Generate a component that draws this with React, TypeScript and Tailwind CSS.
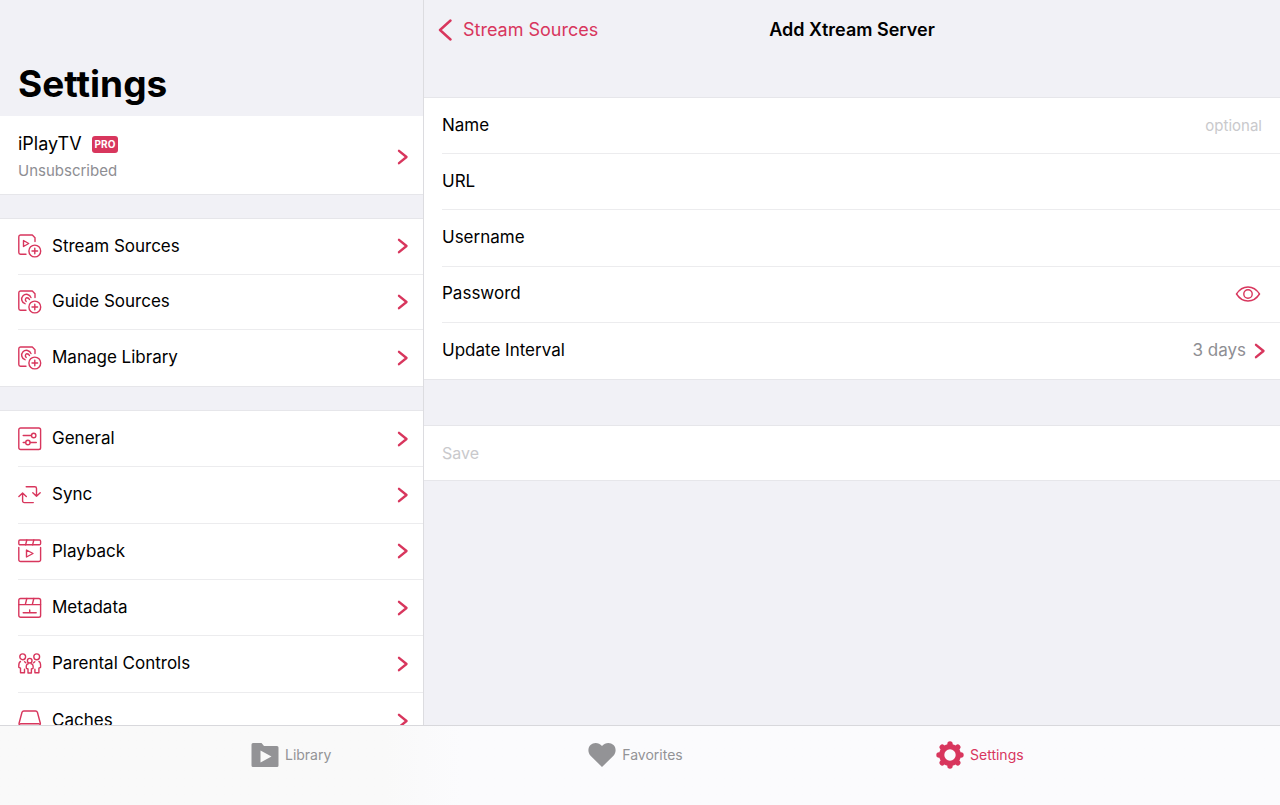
import type { ReactNode } from "react";

type IconProps = { children: ReactNode };

function LineIcon({ children }: IconProps) {
  return (
    <svg
      viewBox="0 0 24 24"
      className="size-6 shrink-0"
      fill="none"
      stroke="currentColor"
      strokeWidth="1.4"
      strokeLinecap="round"
      strokeLinejoin="round"
      aria-hidden="true"
    >
      {children}
    </svg>
  );
}

// Page outline with the round "plus" badge in its corner
function DocumentPlus({ children }: IconProps) {
  return (
    <LineIcon>
      <path d="M8 20.3H2.5A1.8 1.8 0 0 1 .8 18.5V2.8A1.8 1.8 0 0 1 2.5 1H14.3L17 3.7V7.5" />
      {children}
      <circle cx="16.8" cy="17" r="5.9" />
      <path d="M16.8 14.2v5.6M14 17h5.6" />
    </LineIcon>
  );
}

const guideIcon = (
  <DocumentPlus>
    <path d="M7 13.7A4.8 4.8 0 1 1 13 7.6" />
    <path d="M8.2 11.4A2.1 2.1 0 0 1 8.9 7.7q1.800.1 2.600 1.800" />
  </DocumentPlus>
);

const sources = [
  {
    label: "Stream Sources",
    icon: (
      <DocumentPlus>
        <path d="M5.5 6.5v6l5.200-3z" />
      </DocumentPlus>
    ),
  },
  { label: "Guide Sources", icon: guideIcon },
  { label: "Manage Library", icon: guideIcon },
];

const preferences = [
  {
    label: "General",
    icon: (
      <LineIcon>
        <rect x="0.8" y="1" width="21.8" height="21.5" rx="1.8" />
        <path d="M5.2 8.5h8M5.2 15.5h2.3M12.3 15.5h6" />
        <circle cx="15.7" cy="8.5" r="2.2" />
        <circle cx="9.9" cy="15.5" r="2.2" />
      </LineIcon>
    ),
  },
  {
    label: "Sync",
    icon: (
      <LineIcon>
        <path d="M8.2 3.8h8.6a1.7 1.7 0 0 1 1.7 1.7v7.8M14.8 9.800l3.700 3.500 3.700-3.500" />
        <path d="M15.3 19.6H6.3a1.7 1.7 0 0 1-1.7-1.7V10M.9 13.5 4.6 10l3.7 3.5" />
      </LineIcon>
    ),
  },
  {
    label: "Playback",
    icon: (
      <LineIcon>
        <rect x="0.8" y="1" width="21.8" height="4.8" rx="1.2" />
        <path d="M8.8 1 7.6 5.8M15.8 1l-1.2 4.8" />
        <path d="M.8 8.5v12.2a1.8 1.8 0 0 0 1.8 1.8h18.2a1.8 1.8 0 0 0 1.8-1.8V8.5" />
        <path d="M8.500 11v7l6.500-3.500z" />
      </LineIcon>
    ),
  },
  {
    label: "Metadata",
    icon: (
      <LineIcon>
        <rect x="0.8" y="2.5" width="21.8" height="18.8" rx="1.8" />
        <path d="M.8 8.600h21.800M8.800 2.500 7.300 8.600M15.800 2.500l-1.500 6.100M5.200 16.800h13M11.700 14v2.800" />
      </LineIcon>
    ),
  },
  {
    label: "Parental Controls",
    icon: (
      <LineIcon>
        <circle cx="4.7" cy="4.8" r="2.9" />
        <circle cx="18.7" cy="4.8" r="2.9" />
        <circle cx="11.7" cy="8.7" r="2.3" />
        <path d="M2.5 9.5C.8 10.2.6 11.5.8 15.300l1.700.9v4.500h4v-3.500M6.600 9.800l1.200 1" />
        <path d="M20.9 9.500c1.700.7 1.900 2 1.700 5.800l-1.700.9v4.500h-4v-3.500M16.800 9.800l-1.200 1" />
        <path d="M10.3 11.800c-1.900.2-2.300 1.500-2 4.500l1.700.7v4h3.400v-4l1.700-.7c.3-3-.1-4.300-2-4.500" />
      </LineIcon>
    ),
  },
  {
    label: "Caches",
    icon: (
      <LineIcon>
        <path d="M1 14.500 4 3.300A2 2 0 0 1 6 2h11.400a2 2 0 0 1 2 1.300l3 11.200" />
        <path d="M1 16.500A1.800 1.800 0 0 1 2.800 14.700h17.800a1.800 1.800 0 0 1 1.800 1.800V20a1.800 1.800 0 0 1-1.800 1.800H2.800A1.800 1.800 0 0 1 1 20z" />
      </LineIcon>
    ),
  },
];

function Chevron() {
  return (
    <svg
      viewBox="0 0 12 16"
      className="h-4 w-3 shrink-0 text-[#d8365d]"
      fill="none"
      stroke="currentColor"
      strokeWidth="2.4"
      strokeLinecap="round"
      strokeLinejoin="round"
      aria-hidden="true"
    >
      <path d="M2 1.800 9.500 8 2 14.200" />
    </svg>
  );
}

type MenuProps = { items: { label: string; icon: ReactNode }[]; className: string };

function Menu({ items, className }: MenuProps) {
  return (
    <ul
      className={`grid shrink-0 auto-rows-fr border-y border-[#e6e6ea] bg-white pl-[18px] ${className}`}
    >
      {items.map((item) => (
        <li key={item.label} className="flex border-b border-[#ececee] last:border-b-0">
          <a href="#" className="flex flex-1 items-center gap-[10px] pr-[14px] text-[17px]">
            <span className="text-[#d8365d]">{item.icon}</span>
            <span className="flex-1">{item.label}</span>
            <Chevron />
          </a>
        </li>
      ))}
    </ul>
  );
}

type FieldProps = {
  id: string;
  label: string;
  type?: string;
  placeholder?: string;
  children?: ReactNode;
};

function Field({ id, label, type = "text", placeholder, children }: FieldProps) {
  return (
    <div className="flex items-center gap-4 border-b border-[#ececee] pr-[18px]">
      <label htmlFor={id} className="text-[17px]">
        {label}
      </label>
      <input
        id={id}
        type={type}
        placeholder={placeholder}
        className="h-full min-w-0 flex-1 bg-transparent text-right text-[15px] outline-none placeholder:text-[#c9c9cc]"
      />
      {children}
    </div>
  );
}

function Sidebar() {
  return (
    <aside className="flex w-[424px] shrink-0 flex-col overflow-hidden border-r border-[#dcdce0]">
      <h1 className="shrink-0 px-[18px] pt-[60px] pb-2 text-[37px] leading-12 font-bold">
        Settings
      </h1>
      <a
        href="#"
        className="mb-[23px] flex shrink-0 items-center border-b border-[#e6e6ea] bg-white pt-[14px] pr-[14px] pb-[10px] pl-[18px]"
      >
        <span className="flex flex-1 flex-col">
          <span className="flex items-center gap-[10px] text-lg leading-7">
            iPlayTV
            <span className="rounded-[3px] bg-[#d8365d] px-[3px] text-[10px] leading-[17px] font-bold text-white">
              PRO
            </span>
          </span>
          <span className="text-[15px] leading-[26px] text-[#8e8e93]">Unsubscribed</span>
        </span>
        <Chevron />
      </a>
      <Menu items={sources} className="mb-[23px] min-h-[169px]" />
      <Menu items={preferences} className="min-h-[340px]" />
    </aside>
  );
}

function ServerForm() {
  return (
    <main className="min-w-0 flex-1 overflow-hidden">
      <header className="mb-[37px] grid h-[60px] grid-cols-[1fr_auto_1fr] items-center px-[14px]">
        <a href="#" className="flex items-center gap-[10px] text-lg text-[#d8365d]">
          <svg
            viewBox="0 0 15 22"
            className="h-[22px] w-[15px]"
            fill="none"
            stroke="currentColor"
            strokeWidth="2.4"
            strokeLinecap="round"
            strokeLinejoin="round"
            aria-hidden="true"
          >
            <path d="M12.500 1.500 2 11l10.500 9.500" />
          </svg>
          Stream Sources
        </a>
        <h2 className="text-lg font-semibold">Add Xtream Server</h2>
      </header>

      <form>
        <div className="mb-[45px] grid min-h-[283px] auto-rows-fr border-y border-[#e6e6ea] bg-white pl-[18px]">
          <Field id="name" label="Name" placeholder="optional" />
          <Field id="url" label="URL" />
          <Field id="username" label="Username" />
          <Field id="password" label="Password" type="password">
            <button type="button" aria-label="Show password" className="text-[#d8365d]">
              <svg
                viewBox="0 0 28 18"
                className="h-[18px] w-7"
                fill="none"
                stroke="currentColor"
                strokeWidth="1.4"
                aria-hidden="true"
              >
                <path d="M2.500 9C5.500 4.300 9.500 2 14 2s8.500 2.300 11.500 7c-3 4.700-7 7-11.500 7S5.500 13.700 2.500 9z" />
                <circle cx="14" cy="9" r="4.2" />
              </svg>
            </button>
          </Field>
          <div className="flex items-center gap-2 pr-[14px]">
            <label htmlFor="interval" className="flex-1 text-[17px]">
              Update Interval
            </label>
            <select
              id="interval"
              className="field-sizing-content appearance-none bg-transparent text-[17px] text-[#8e8e93] outline-none"
            >
              <option>3 days</option>
            </select>
            <Chevron />
          </div>
        </div>
        <button
          type="submit"
          disabled
          className="h-14 w-full border-y border-[#e6e6ea] bg-white px-[18px] text-left text-base text-[#c9c9cc]"
        >
          Save
        </button>
      </form>
    </main>
  );
}

function TabBar() {
  return (
    <nav className="grid h-20 shrink-0 grid-cols-3 items-start border-t border-[#d8d8dc] bg-linear-to-r from-[#f9f9f9] from-30% to-[#fbfbfd] to-36% pt-[15px] pr-[128px] pl-[119px] text-sm text-[#939396]">
      <a href="#" className="flex items-center justify-center gap-[6px]">
        <svg viewBox="0 0 28 28" className="size-7" aria-hidden="true">
          <path
            fill="currentColor"
            fillRule="evenodd"
            d="M2 2h8.500l2.500 3h13a1.500 1.500 0 0 1 1.500 1.500v18A1.500 1.500 0 0 1 26 26H2a1.500 1.500 0 0 1-1.500-1.500v-21A1.500 1.500 0 0 1 2 2zM9.500 9.500v12l11-6z"
          />
        </svg>
        Library
      </a>
      <a href="#" className="flex items-center justify-center gap-[6px]">
        <svg viewBox="0 0 28 28" className="size-7" aria-hidden="true">
          <path
            fill="currentColor"
            d="M14 26 2.800 15C-.5 11.500-.2 6.500 2.500 4c3.200-3.200 8.500-2.700 11.500 1 3-3.700 8.300-4.200 11.500-1 2.700 2.500 3 7.500-.3 11z"
          />
        </svg>
        Favorites
      </a>
      <a
        href="#"
        aria-current="page"
        className="flex items-center justify-center gap-[6px] text-[#d8365d]"
      >
        <svg viewBox="0 0 28 28" className="size-7" aria-hidden="true">
          <circle cx="14" cy="14" r="8.3" fill="none" stroke="currentColor" strokeWidth="5.2" />
          {[0, 45, 90, 135, 180, 225, 270, 315].map((angle) => (
            <circle
              key={angle}
              cx="14"
              cy="3"
              r="2.7"
              fill="currentColor"
              transform={`rotate(${angle} 14 14)`}
            />
          ))}
        </svg>
        Settings
      </a>
    </nav>
  );
}

export default function App() {
  return (
    <div className="flex h-screen flex-col bg-[#f1f1f6] font-['Inter',sans-serif] text-black">
      <div className="flex min-h-0 flex-1">
        <Sidebar />
        <ServerForm />
      </div>
      <TabBar />
    </div>
  );
}
